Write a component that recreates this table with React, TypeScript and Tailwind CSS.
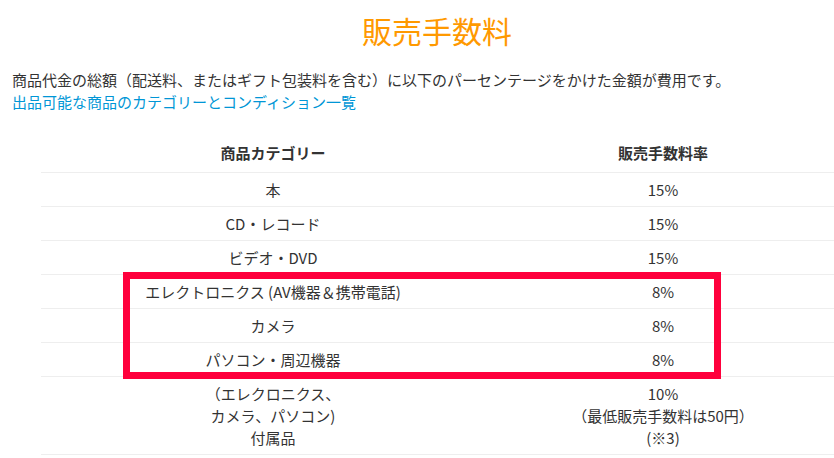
const rows: { category: string[]; rate: string[] }[] = [
  { category: ['本'], rate: ['15%'] },
  { category: ['CD・レコード'], rate: ['15%'] },
  { category: ['ビデオ・DVD'], rate: ['15%'] },
  { category: ['エレクトロニクス (AV機器＆携帯電話)'], rate: ['8%'] },
  { category: ['カメラ'], rate: ['8%'] },
  { category: ['パソコン・周辺機器'], rate: ['8%'] },
  {
    category: ['（エレクロニクス、', 'カメラ、パソコン)', '付属品'],
    rate: ['10%', '（最低販売手数料は50円）', '(※3)'],
  },
];

const App: React.FC = () => {
  return (
    <div
      className="relative w-[834px] h-[458px] overflow-hidden bg-white px-3 text-[#333]"
      style={{ fontFamily: '"Noto Sans CJK JP", "Noto Sans", sans-serif' }}
    >
      <h2 className="pt-[10px] pl-[40px] text-center text-[30px] leading-[40px] font-normal text-[#ff9900]">
        販売手数料
      </h2>

      <p className="mt-[19px] text-[15px] leading-[22px] whitespace-nowrap">
        商品代金の総額（配送料、またはギフト包装料を含む）に以下のパーセンテージをかけた金額が費用です。
      </p>
      <a href="#" className="block text-[15px] leading-[22px] text-[#0096d6]">
        出品可能な商品のカテゴリーとコンディション一覧
      </a>

      <div className="mt-[29px] ml-[29px] w-[793px] text-[15px] leading-[22px]">
        <div className="grid grid-cols-[464px_1fr] border-b border-[#eeeeee] font-bold">
          <div className="pb-[8px] text-center">商品カテゴリー</div>
          <div className="pb-[8px] pr-[13px] text-center">販売手数料率</div>
        </div>
        {rows.map((row, i) => (
          <div
            key={i}
            className="grid grid-cols-[464px_1fr] border-b border-[#eeeeee]"
          >
            <div className="pt-[6px] pb-[5px] text-center">
              {row.category.map((line, j) => (
                <div key={j}>{line}</div>
              ))}
            </div>
            <div className="pt-[6px] pb-[5px] pr-[13px] text-center">
              {row.rate.map((line, j) => (
                <div key={j}>{line}</div>
              ))}
            </div>
          </div>
        ))}
      </div>

      {/* highlight annotation */}
      <div className="pointer-events-none absolute left-[123px] top-[272px] h-[107px] w-[598px] border-[7px] border-[#ff003c]" />
    </div>
  );
};

export default App;
